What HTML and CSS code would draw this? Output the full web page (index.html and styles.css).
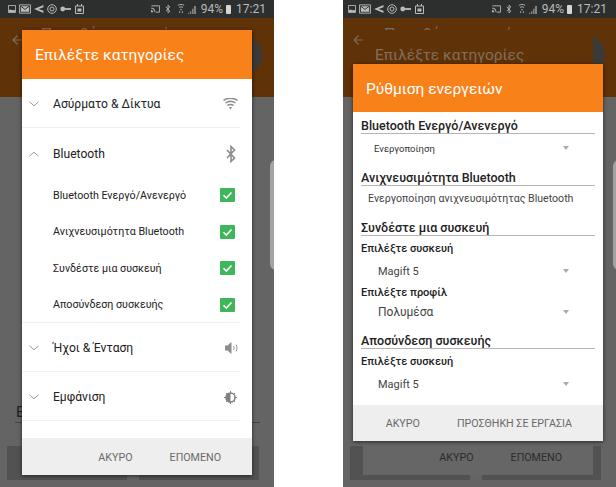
FILE: index.html
```html
<!DOCTYPE html>
<html lang="el">
  <head>
    <meta charset="UTF-8" />
    <meta name="viewport" content="width=device-width, initial-scale=1.0" />
    <title>Επιλέξτε κατηγορίες</title>
    <link rel="stylesheet" href="styles.css">
  </head>
  <body>
    <svg class="sprites" width="0" height="0">
      <symbol id="i-image" viewBox="0 0 9 9"><path d="M.5 .5h8v8h-8z" fill="none" stroke="currentColor"/><path d="M1 6l2-1 2 1 3-.5V8H1z" fill="currentColor"/></symbol>
      <symbol id="i-mail" viewBox="0 0 13 10"><path d="M.5 .5h12v9H.5z" fill="none" stroke="currentColor"/><path d="M2 2h9v6H2z" fill="currentColor"/><path d="M2 2l4.500 3.500L11 2" fill="none" stroke="#2d2f2f"/></symbol>
      <symbol id="i-share" viewBox="0 0 11 9"><path d="M10.500 0v2.500L5 4.500l5.500 2V9L0 4.500z" fill="currentColor"/></symbol>
      <symbol id="i-at" viewBox="0 0 10 10"><circle cx="5" cy="5" r="4.300" fill="none" stroke="currentColor"/><circle cx="5" cy="5" r="2" fill="none" stroke="currentColor"/></symbol>
      <symbol id="i-key" viewBox="0 0 12 6"><circle cx="3" cy="3" r="2.600" fill="currentColor"/><path d="M5 2h7v2H5z" fill="currentColor"/></symbol>
      <symbol id="i-calendar" viewBox="0 0 9 10"><path d="M.5 2h8v7.500h-8z" fill="none" stroke="currentColor"/><path d="M2 0h1v2H2zM6 0h1v2H6zM2.500 4.500h4v3h-4z" fill="currentColor"/></symbol>
      <symbol id="i-cast" viewBox="0 0 10 8"><path d="M.5 .5h9v7h-4" fill="none" stroke="currentColor"/><path d="M0 2.500h1c2 0 4 2 4 5H4c0-2-1.500-4-4-4zM0 5c1.500 0 2.500 1 2.500 2.500H0z" fill="currentColor"/></symbol>
      <symbol id="i-bt" viewBox="0 0 8 14"><path d="M1 4l5.500 6L4 12.500v-11L6.500 4 1 10" fill="none" stroke="currentColor" stroke-width="1.200"/></symbol>
      <symbol id="i-wifi-s" viewBox="0 0 8 11"><path d="M.5 1.500c2-1.300 5-1.300 7 0M1.800 3.800c1.300-.9 3.100-.9 4.400 0" fill="none" stroke="currentColor"/><path d="M3 5.500h2l-1 2zM2 8h1v2H2zM5 8h1v2H5z" fill="currentColor"/></symbol>
      <symbol id="i-signal" viewBox="0 0 9 10"><path d="M0 10V8.500h1V10zM2.500 10V6.500h1V10zM5 10V3.500h1.200V10zM7.500 10V0H9v10z" fill="currentColor"/></symbol>
      <symbol id="i-arrow" viewBox="0 0 11 10"><path d="M11 5H1M5.500 .5L1 5l4.500 4.500" fill="none" stroke="currentColor" stroke-width="1.200"/></symbol>
      <symbol id="i-chevron" viewBox="0 0 10 6"><path d="M.5 .8L5 4.800 9.500 .8" fill="none" stroke="#9a9a9a" stroke-width="1"/></symbol>
      <symbol id="i-wifi" viewBox="0 0 15 12"><path d="M.5 2.500c4-3 10-3 14 0M2.500 5c3-2 7-2 10 0M4.500 7.500c2-1.200 4-1.200 6 0" fill="none" stroke="currentColor" stroke-width="1.500"/><path d="M6 9h3l-1.500 2.800z" fill="currentColor"/></symbol>
      <symbol id="i-bt-big" viewBox="0 0 10 18"><path d="M1 5l7.500 8L5 16.500v-15L8.500 5 1 13" fill="none" stroke="currentColor" stroke-width="1.600"/></symbol>
      <symbol id="i-volume" viewBox="0 0 14 12"><path d="M0 3.500h2.500L6.500 0v12l-4-3.500H0z" fill="currentColor"/><path d="M8.500 4c.8 1.200.8 2.800 0 4M11 2.500c1.300 2 1.300 5 0 7" fill="none" stroke="currentColor" stroke-width=".9"/></symbol>
      <symbol id="i-brightness" viewBox="0 0 13 13"><circle cx="6.500" cy="6.500" r="4.500" fill="none" stroke="currentColor" stroke-width="1.500"/><path d="M6.500 2a4.500 4.500 0 0 0 0 9z" fill="currentColor"/><path d="M6.500 0v2M6.500 11v2M0 6.500h2M11 6.500h2M2 2l1.300 1.300M9.700 9.700L11 11M2 11l1.300-1.300M9.700 3.300L11 2" stroke="currentColor"/></symbol>
      <symbol id="i-check" viewBox="0 0 14 14"><path d="M3 7.200l2.800 2.800L11 4.500" fill="none" stroke="#fff" stroke-width="1.600"/></symbol>
    </svg>

    <!-- first phone: category list -->
    <div class="phone">
      <div class="status-bar">
        <svg class="st st-image"><use href="#i-image"/></svg>
        <svg class="st st-mail"><use href="#i-mail"/></svg>
        <svg class="st st-share"><use href="#i-share"/></svg>
        <svg class="st st-at"><use href="#i-at"/></svg>
        <svg class="st st-key"><use href="#i-key"/></svg>
        <svg class="st st-calendar"><use href="#i-calendar"/></svg>
        <span class="status-spacer"></span>
        <svg class="st st-cast"><use href="#i-cast"/></svg>
        <svg class="st st-bt"><use href="#i-bt"/></svg>
        <svg class="st st-wifi"><use href="#i-wifi-s"/></svg>
        <svg class="st st-signal"><use href="#i-signal"/></svg>
        <span class="status-text">94%</span>
        <span class="battery"></span>
        <span class="status-text">17:21</span>
      </div>
      <div class="app-bar">
        <svg class="back-arrow"><use href="#i-arrow"/></svg>
        <span class="app-title">Προσθήκη εργασίας</span>
      </div>
      <div class="app-main">
        <div class="app-field">Ε</div>
        <div class="app-buttons">
          <span class="app-button"></span>
          <span class="app-button"></span>
        </div>
      </div>
      <span class="fab"></span>
      <span class="side-card"></span>

      <div class="dialog dialog-list">
        <div class="dialog-header">Επιλέξτε κατηγορίες</div>
        <div class="dialog-body">
          <div class="cat-row">
            <svg class="chevron"><use href="#i-chevron"/></svg>
            <span class="cat-name">Ασύρματο &amp; Δίκτυα</span>
            <svg class="cat-icon icon-wifi"><use href="#i-wifi"/></svg>
          </div>
          <div class="cat-group">
            <div class="cat-row cat-row-open">
              <svg class="chevron chevron-up"><use href="#i-chevron"/></svg>
              <span class="cat-name">Bluetooth</span>
              <svg class="cat-icon icon-bt"><use href="#i-bt-big"/></svg>
            </div>
            <div class="sub-row"><span>Bluetooth Ενεργό/Ανενεργό</span><svg class="check"><use href="#i-check"/></svg></div>
            <div class="sub-row"><span>Ανιχνευσιμότητα Bluetooth</span><svg class="check"><use href="#i-check"/></svg></div>
            <div class="sub-row"><span>Συνδέστε μια συσκευή</span><svg class="check"><use href="#i-check"/></svg></div>
            <div class="sub-row"><span>Αποσύνδεση συσκευής</span><svg class="check"><use href="#i-check"/></svg></div>
          </div>
          <div class="cat-row">
            <svg class="chevron"><use href="#i-chevron"/></svg>
            <span class="cat-name">Ήχοι &amp; Ένταση</span>
            <svg class="cat-icon icon-volume"><use href="#i-volume"/></svg>
          </div>
          <div class="cat-row">
            <svg class="chevron"><use href="#i-chevron"/></svg>
            <span class="cat-name">Εμφάνιση</span>
            <svg class="cat-icon icon-brightness"><use href="#i-brightness"/></svg>
          </div>
        </div>
        <div class="dialog-footer">
          <span>ΑΚΥΡΟ</span>
          <span>ΕΠΟΜΕΝΟ</span>
        </div>
      </div>
    </div>

    <!-- second phone: action settings over the dimmed list -->
    <div class="phone phone-right">
      <div class="status-bar">
        <svg class="st st-image"><use href="#i-image"/></svg>
        <svg class="st st-mail"><use href="#i-mail"/></svg>
        <svg class="st st-share"><use href="#i-share"/></svg>
        <svg class="st st-at"><use href="#i-at"/></svg>
        <svg class="st st-key"><use href="#i-key"/></svg>
        <svg class="st st-calendar"><use href="#i-calendar"/></svg>
        <span class="status-spacer"></span>
        <svg class="st st-cast"><use href="#i-cast"/></svg>
        <svg class="st st-bt"><use href="#i-bt"/></svg>
        <svg class="st st-wifi"><use href="#i-wifi-s"/></svg>
        <svg class="st st-signal"><use href="#i-signal"/></svg>
        <span class="status-text">94%</span>
        <span class="battery"></span>
        <span class="status-text">17:21</span>
      </div>
      <div class="app-bar">
        <svg class="back-arrow"><use href="#i-arrow"/></svg>
        <span class="app-title">Προσθήκη εργασίας</span>
      </div>
      <div class="app-main">
        <div class="app-field">Ε</div>
        <div class="app-buttons">
          <span class="app-button"></span>
          <span class="app-button"></span>
        </div>
      </div>
      <span class="fab"></span>
      <span class="side-card"></span>

      <div class="dialog dialog-dimmed">
        <div class="dialog-header">Επιλέξτε κατηγορίες</div>
        <div class="dialog-body"></div>
        <div class="dialog-footer">
          <span>ΑΚΥΡΟ</span>
          <span>ΕΠΟΜΕΝΟ</span>
        </div>
      </div>

      <div class="dialog dialog-actions">
        <div class="dialog-header">Ρύθμιση ενεργειών</div>
        <div class="dialog-body action-body">
          <div class="section-title">Bluetooth Ενεργό/Ανενεργό</div>
          <div class="select select-small"><span>Ενεργοποίηση</span><i class="caret"></i></div>

          <div class="section-title">Ανιχνευσιμότητα Bluetooth</div>
          <div class="static-text">Ενεργοποίηση ανιχνευσιμότητας Bluetooth</div>

          <div class="section-title section-title-wide">Συνδέστε μια συσκευή</div>
          <div class="field-label">Επιλέξτε συσκευή</div>
          <div class="select select-device"><span>Magift 5</span><i class="caret"></i></div>
          <div class="field-label field-label-tight">Επιλέξτε προφίλ</div>
          <div class="select select-profile"><span>Πολυμέσα</span><i class="caret"></i></div>

          <div class="section-title section-title-wide">Αποσύνδεση συσκευής</div>
          <div class="field-label">Επιλέξτε συσκευή</div>
          <div class="select select-device"><span>Magift 5</span><i class="caret"></i></div>
        </div>
        <div class="dialog-footer">
          <span>ΑΚΥΡΟ</span>
          <span>ΠΡΟΣΘΗΚΗ ΣΕ ΕΡΓΑΣΙΑ</span>
        </div>
      </div>
    </div>
  </body>
</html>
```

FILE: styles.css
```css
html,
body {
  margin: 0;
  padding: 0;
}
body {
  width: 616px;
  height: 487px;
  overflow: hidden;
  display: flex;
  gap: 69px;
  background-color: #fff;
  font-family: "Roboto", "Noto Sans", sans-serif;
}
.sprites {
  position: absolute;
}

/* phone behind the dialogs */
.phone {
  position: relative;
  width: 274px;
  height: 487px;
  flex: none;
  display: flex;
  flex-direction: column;
  overflow: hidden;
  background-color: #646464;
}
.phone-right {
  width: 273px;
}
.status-bar {
  height: 18px;
  flex: none;
  display: flex;
  align-items: center;
  padding: 0 8px 0 8px;
  background-color: #2d2f2f;
  color: #b9bbbb;
}
.phone-right .status-bar {
  padding: 0 9px 0 5px;
}
.status-spacer {
  flex: 1;
}
.st {
  display: block;
  flex: none;
}
.st-image {
  width: 8px;
  height: 8px;
  margin-right: 3px;
}
.st-mail {
  width: 12px;
  height: 10px;
  margin-right: 3px;
}
.st-share {
  width: 10px;
  height: 8px;
  margin-right: 3px;
}
.st-at {
  width: 10px;
  height: 10px;
  margin-right: 3px;
}
.st-key {
  width: 11px;
  height: 6px;
  margin-right: 4px;
}
.st-calendar {
  width: 9px;
  height: 10px;
}
.st-cast {
  width: 9px;
  height: 8px;
  margin-right: 5px;
}
.st-bt {
  width: 6px;
  height: 10px;
  margin-right: 6px;
}
.st-wifi {
  width: 8px;
  height: 10px;
  margin-right: 3px;
}
.st-signal {
  width: 8px;
  height: 8px;
  margin-right: 5px;
  margin-top: 2px;
}
.status-text {
  font-size: 12px;
  line-height: 18px;
}
.battery {
  width: 5px;
  height: 9px;
  margin: 0 5px 0 3px;
  border-radius: 1px;
  background-color: #d5d6d6;
}

.app-bar {
  height: 79px;
  flex: none;
  position: relative;
  background-color: #5f3207;
}
.back-arrow {
  display: block;
  width: 11px;
  height: 10px;
  margin: 17px 0 0 12px;
  color: #7d6d5c;
}
.phone-right .back-arrow {
  margin-left: 10px;
}
.app-title {
  position: absolute;
  left: 41px;
  top: 7px;
  font-size: 16px;
  color: #7d6d5c;
}
.app-main {
  flex: 1;
  padding: 305px 15px 0;
  display: flex;
  flex-direction: column;
}
.app-field {
  height: 20px;
  width: 244px;
  padding-left: 1px;
  font-size: 15px;
  line-height: 20px;
  color: #222;
  border-bottom: 1px solid #444;
}
.app-buttons {
  display: flex;
  gap: 12px;
  margin: 23px 0 0 -8px;
}
.app-button {
  width: 124px;
  height: 34px;
  background-color: #525252;
}
.fab {
  position: absolute;
  left: 222px;
  top: 35px;
  width: 40px;
  height: 40px;
  border-radius: 50%;
  background-color: #3b3a39;
}
.side-card {
  position: absolute;
  left: 270px;
  top: 160px;
  width: 20px;
  height: 110px;
  border-radius: 6px;
  background-color: #a3a3a3;
}

/* dialogs */
.dialog {
  position: absolute;
  display: flex;
  flex-direction: column;
  background-color: #fff;
  box-shadow: 0 1px 4px rgba(0, 0, 0, 0.6);
}
.dialog-header {
  height: 49px;
  flex: none;
  padding-left: 13px;
  font-size: 15.5px;
  line-height: 51px;
  color: #fff;
  background-color: #f9811a;
}
.dialog-body {
  flex: 1;
}
.dialog-footer {
  height: 37px;
  flex: none;
  display: flex;
  justify-content: flex-end;
  gap: 37px;
  padding-right: 31px;
  font-size: 10.7px;
  line-height: 39px;
  color: #6a6a6a;
  background-color: #eeeeee;
}
.dialog-list {
  left: 22px;
  top: 30px;
  width: 230px;
  height: 445px;
}
.dialog-dimmed {
  left: 20px;
  top: 30px;
  width: 230px;
  height: 445px;
  background-color: #666;
  box-shadow: none;
}
.dialog-dimmed .dialog-header {
  padding-left: 12px;
  color: #7f6f5e;
  background-color: #5f3207;
}
.dialog-dimmed .dialog-footer {
  color: #2c2c2c;
  background-color: #666;
}
.dialog-actions {
  left: 10px;
  top: 64px;
  width: 250px;
  height: 377px;
}
.dialog-actions .dialog-header {
  height: 48px;
  line-height: 50px;
}
.dialog-actions .dialog-footer {
  height: 36px;
  line-height: 38px;
}

/* category list */
.cat-row {
  height: 46px;
  margin: 0 11px 0 0;
  padding: 2px 0 0 7px;
  display: flex;
  align-items: center;
  border-bottom: 1px solid #f0f0f0;
}
.cat-row-open {
  border-bottom: 0;
  height: 47px;
}
.cat-group {
  margin-right: 11px;
  height: 194px;
  border-bottom: 1px solid #f0f0f0;
}
.cat-group .cat-row {
  margin-right: 0;
}
.chevron {
  width: 10px;
  height: 6px;
  flex: none;
  margin-right: 14px;
}
.chevron-up {
  transform: rotate(180deg);
}
.cat-name {
  flex: 1;
  font-size: 12.1px;
  color: #222;
}
.cat-icon {
  flex: none;
  margin-right: 3px;
  color: #8c8c8c;
}
.icon-wifi {
  width: 15px;
  height: 12px;
}
.icon-bt {
  width: 10px;
  height: 18px;
  margin-right: 5px;
}
.icon-volume {
  width: 14px;
  height: 14px;
  margin-right: 2px;
}
.icon-brightness {
  width: 13px;
  height: 13px;
  margin-right: 4px;
  color: #808080;
}
.sub-row {
  height: 36.5px;
  display: flex;
  align-items: center;
  justify-content: space-between;
  padding: 0 6px 0 31px;
  font-size: 10.7px;
  color: #222;
}
.check {
  width: 15px;
  height: 14px;
  flex: none;
  border-radius: 1px;
  background-color: #3fb65a;
}

/* action settings */
.action-body {
  padding: 0 8px;
  overflow: hidden;
}
.section-title {
  height: 17px;
  margin-top: 6px;
  font-size: 12.5px;
  font-weight: 500;
  line-height: 19px;
  color: #222;
  border-bottom: 1px solid #b5b5b5;
}
.section-title:first-child {
  margin-top: 4px;
}
.section-title-wide {
  margin-top: 8px;
}
.select {
  height: 22px;
  display: flex;
  align-items: center;
  justify-content: space-between;
  padding: 0 26px 0 17px;
  font-size: 12px;
  color: #444;
}
.select-small {
  height: 28px;
  padding-left: 13px;
  font-size: 9.5px;
  color: #333;
}
.select-device {
  font-size: 11px;
}
.select-profile {
  height: 20px;
  margin-bottom: 9px;
}
.select-profile + .section-title-wide {
  margin-top: 0;
}
.caret {
  width: 0;
  height: 0;
  border-left: 3.5px solid transparent;
  border-right: 3.5px solid transparent;
  border-top: 4px solid #aaa;
}
.static-text {
  height: 24px;
  padding-left: 7px;
  font-size: 10.6px;
  line-height: 26px;
  color: #444;
}
.field-label {
  height: 24px;
  font-size: 11px;
  font-weight: 500;
  line-height: 26px;
  color: #222;
}
.field-label-tight {
  height: 20px;
  line-height: 22px;
}
```
